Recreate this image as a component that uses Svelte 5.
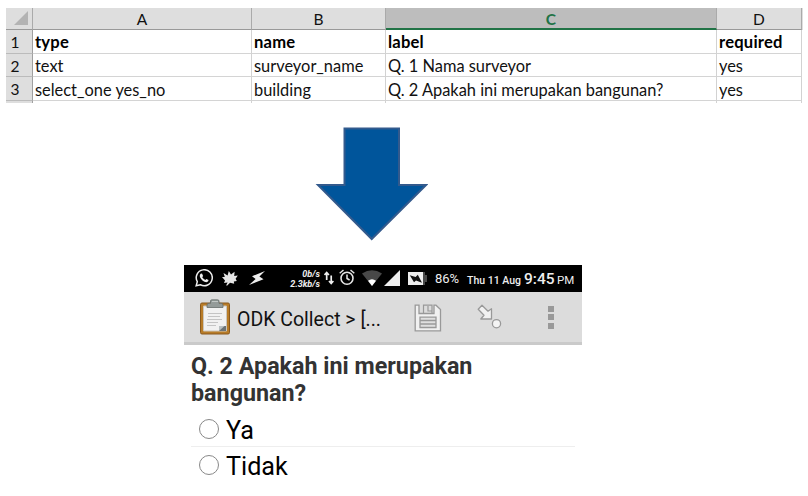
<script>
  const columns = ['A', 'B', 'C', 'D'];
  const rows = [
    ['type', 'name', 'label', 'required'],
    ['text', 'surveyor_name', 'Q. 1 Nama surveyor', 'yes'],
    ['select_one yes_no', 'building', 'Q. 2 Apakah ini merupakan bangunan?', 'yes']
  ];
  const options = ['Ya', 'Tidak'];
</script>

<main>
  <section class="sheet">
    <div class="row head">
      <div class="corner"><svg width="26" height="21" viewBox="0 0 26 21"><path d="M8 17H22V3Z" fill="#b3b3b3" /></svg></div>
      {#each columns as c}
        <div class="cell" class:selected={c === 'C'}>{c}</div>
      {/each}
    </div>
    {#each rows as row, i}
      <div class="row" class:bold={i === 0} class:short={i === 1}>
        <div class="num">{i + 1}</div>
        {#each row as value}
          <div class="cell"><span>{value}</span></div>
        {/each}
      </div>
    {/each}
    <div class="row stub"><div class="num"></div><div class="cell"></div><div class="cell"></div><div class="cell"></div><div class="cell"></div></div>
  </section>

  <svg class="arrow" width="114" height="116" viewBox="314 126 114 116">
    <path d="M344.5 128.500H399V185H426L371.700 239L318 185H344.500Z" fill="#00559b" stroke="#335a8d" stroke-width="2" />
  </svg>

  <section class="phone">
    <header class="status">
      <svg class="wa" width="18" height="18" viewBox="0 0 18 18">
        <path d="M1.200 16.800L2.300 12.700A8 8 0 1 1 5.300 15.700Z" fill="none" stroke="#eee" stroke-width="1.500" />
        <path d="M5.600 4.800L7 4.600L8.100 7.100L7.200 8.200Q8.300 10.100 10.300 10.900L11.300 9.900L13.600 11.100Q13.500 13 11.400 13.300Q7.300 12.800 4.900 8Q4.400 5.900 5.600 4.800Z" fill="#eee" />
      </svg>
      <svg class="leaf" width="16" height="15" viewBox="0 0 16 15">
        <path d="M6.800 0L9 3.500L12.600 .8L12.200 5L15.800 4.600L13.600 7.800L14.800 10L11.800 10.500L12.200 12.800L8 11.800L5 14.800L4.200 14.200L5.600 11.500L2 12L3 9.500L0 6L2.800 6L1.500 2L5.600 4.600Z" fill="#e6e6e6" />
      </svg>
      <svg class="bolt" width="17" height="14" viewBox="0 0 17 14">
        <path d="M16 0L3 5.200L6.600 8L0 14L14.500 8.300L10.400 5.500Z" fill="#eee" />
      </svg>
      <div class="speed"><span>0b/s</span><span>2.3kb/s</span></div>
      <svg class="updown" width="10" height="14" viewBox="0 0 10 14">
        <path d="M2.700 9V2M.5 4L2.700 1.500L4.900 4M7.200 4.500V12M5 10L7.200 12.500L9.400 10" fill="none" stroke="#eee" stroke-width="1.700" />
      </svg>
      <svg class="alarm" width="16" height="17" viewBox="0 0 16 17">
        <circle cx="8" cy="9.200" r="6" fill="none" stroke="#e5e5e5" stroke-width="1.600" />
        <path d="M8 5.500V9.500L10.600 11M.7 4.300L4.500 1M15.300 4.300L11.500 1" fill="none" stroke="#e5e5e5" stroke-width="1.500" />
      </svg>
      <svg class="wifi" width="20" height="16" viewBox="0 0 20 16">
        <path d="M0 3.500Q10-3 20 3.500L10 16Z" fill="#484848" /><path d="M6 10.800Q10 7.600 14 10.800L10 16Z" fill="#fff" />
      </svg>
      <svg class="signal" width="16" height="16" viewBox="0 0 16 16"><path d="M0 16L16 0V16Z" fill="#eee" /></svg>
      <svg class="battery" width="19" height="13" viewBox="0 0 19 13">
        <path d="M0 0H15V13H0Z" fill="#eee" /><path d="M15 0H17V3H19V10H17V13H15Z" fill="#484848" />
        <path d="M1.800 3.300L7.600 5L9.800 2.800L14 10.800L8 8.400L6 10.200Z" fill="#111" />
      </svg>
      <span class="pct">86%</span>
      <span class="date">Thu 11 Aug</span>
      <span class="time">9:45</span>
      <span class="pm">PM</span>
    </header>

    <div class="bar">
      <svg class="clip" width="32" height="36" viewBox="0 0 32 36">
        <rect x="1.500" y="4" width="29" height="31" rx="1.500" fill="#b87c28" stroke="#89591e" />
        <path d="M4.500 7H27.500V32H4.500Z" fill="#f1f1f1" stroke="#cbc5bb" />
        <path d="M9 14.500H23M9 17.500H21M8 20.500H23M8 23.500H19M8 26.500H17" stroke="#c4c4c4" stroke-width="1.200" />
        <path d="M20 27H27V32H20Z" fill="#6c7376" /><path d="M20 32L25.500 27H20Z" fill="#b9c0c2" />
        <path d="M8 8.500V6Q8 4.300 10 4.300H11.500V2Q11.500 .8 13 .8H18.500Q20 .8 20 2V4.300H22Q24 4.300 24 6V8.500Z" fill="#949b99" stroke="#666d6b" stroke-width=".8" />
        <path d="M13 2.500H19" stroke="#c2c7c5" />
      </svg>
      <span class="title">ODK Collect &gt; [...</span>
      <svg class="save" width="28" height="28" viewBox="0 0 28 28">
        <path d="M1.200 1.200H5V9.500H20V1.200H22L26.500 5.500V26.800H1.200Z" fill="#f1f1f1" stroke="#999" stroke-width="1.300" />
        <path d="M9.500 9V1.200H18V9M14 2V7H17.500" fill="none" stroke="#999" stroke-width="1.200" />
        <path d="M6 13.200H22V23.500H6ZM6 16.500H22M6 20H22" fill="#e0e0e0" stroke="#999" stroke-width="1.300" />
      </svg>
      <svg class="goto" width="26" height="26" viewBox="0 0 26 26">
        <path d="M1.200 5.200L5 1.200L11 7.200L14.500 4.800V15H3.800L7 11.300Z" fill="#f1f1f1" stroke="#999" stroke-width="1.300" stroke-linejoin="round" />
        <circle cx="19.500" cy="19.700" r="4.100" fill="#f4f4f4" stroke="#999" stroke-width="1.300" />
      </svg>
      <div class="more"><i></i><i></i><i></i></div>
    </div>

    <div class="form">
      <h1><span class="q1">Q. 2 Apakah ini merupakan</span><br /><span class="q2">bangunan?</span></h1>
      {#each options as o}
        <div class="option"><i></i><span>{o}</span></div>
      {/each}
    </div>
  </section>
</main>

<style>
  :global(body) { margin: 0; background: #fff; }
  main { width: 808px; height: 496px; overflow: hidden; box-sizing: border-box; padding-top: 8px; display: flex; flex-direction: column; background: #fff; }
  svg { display: block; flex: none; }
  .sheet { margin-left: 6px; width: 797px; font: 16.4px Lato, "Noto Sans", sans-serif; color: #111; }
  .row { display: grid; grid-template-columns: 27px 219px 134px 331px 85px; grid-template-rows: 100%; height: 24px; box-sizing: border-box; }
  .row > div { box-sizing: border-box; border-right: 1px solid #d2d2d2; border-bottom: 1px solid #d4d4d4; white-space: nowrap; line-height: 25px; }
  .row .cell { padding-left: 2px; }
  .row .num { background: #dedede; border-right: 1px solid #a0a0a0; border-bottom-color: #bbb; text-align: center; padding-right: 8px; font-size: 15.5px; }
  .row.short { height: 23px; }
  .row.short > div { line-height: 24px; }
  .row.head { height: 22px; background: #dedede; }
  .row.head > div { text-align: center; border-bottom: 1px solid #999; border-right-color: #aaa; line-height: 22px; padding: 0; font-size: 15.5px; }
  .row.head .selected { background: #bdbdbd; color: #217346; border-bottom: 2px solid #217346; font-weight: 700; }
  .bold .cell { font-weight: 700; color: #000; font-size: 16.6px; letter-spacing: .2px; }
  .row.stub { height: 2px; }
  .row.stub > div { border-bottom: 0; }
  .arrow { margin: 23px 0 0 314px; }
  .phone { width: 398px; margin: 23px 0 0 184px; font-family: Roboto, sans-serif; }
  .status { height: 27px; background: #000; color: #eee; display: flex; white-space: nowrap; }
  .status > * { flex: none; }
  .wa { margin: 4px 0 0 11px; }
  .leaf { margin: 6px 0 0 9px; }
  .bolt { margin: 6px 0 0 11px; }
  .speed { width: 62px; margin: 4px 1px 0 -8px; display: flex; flex-direction: column; text-align: right; font: italic 700 9px/10px Roboto, sans-serif; }
  .updown { margin: 6px 0 0 3px; }
  .alarm { margin: 4px 0 0 5px; }
  .wifi { margin: 5px 0 0 7px; }
  .signal { margin: 5px 0 0 2px; }
  .battery { margin: 7px 0 0 8px; }
  .pct { width: 32px; margin-left: 8px; font-size: 13px; line-height: 28px; }
  .date { width: 57px; font-size: 10.5px; line-height: 31px; font-weight: 500; }
  .time { width: 33px; font-size: 15.500px; line-height: 28px; font-weight: 500; }
  .pm { font-size: 11.500px; line-height: 30px; }
  .bar { height: 53px; box-sizing: border-box; background: #dcdcdc; border-bottom: 3px solid #cacaca; display: flex; align-items: center; }
  .clip { margin-left: 15px; }
  .title { width: 177px; margin-left: 6px; font-size: 19.500px; line-height: 44px; white-space: nowrap; color: #111; padding-top: 5px; }
  .save { margin: 1px 0 0 0; }
  .goto { margin: 0 0 0 35px; }
  .more { margin: 0 0 0 45px; display: flex; flex-direction: column; gap: 2.500px; }
  .more i { width: 6px; height: 6px; background: #999; }
  .form { padding: 8px 7px 0; }
  h1 { margin: 0 0 4px; font-size: 23.3px; line-height: 27px; font-weight: 700; color: #333; white-space: nowrap; }
  .option { height: 36px; box-sizing: border-box; display: flex; align-items: center; padding-left: 8px; font-size: 25.2px; color: #000; padding-top: 3px; }
  .option:not(:last-child) { border-bottom: 1px solid #eee; }
  .option i { width: 20px; height: 20px; box-sizing: border-box; border: 1px solid #888; border-radius: 50%; margin-right: 7px; margin-top: -3px; }
</style>
